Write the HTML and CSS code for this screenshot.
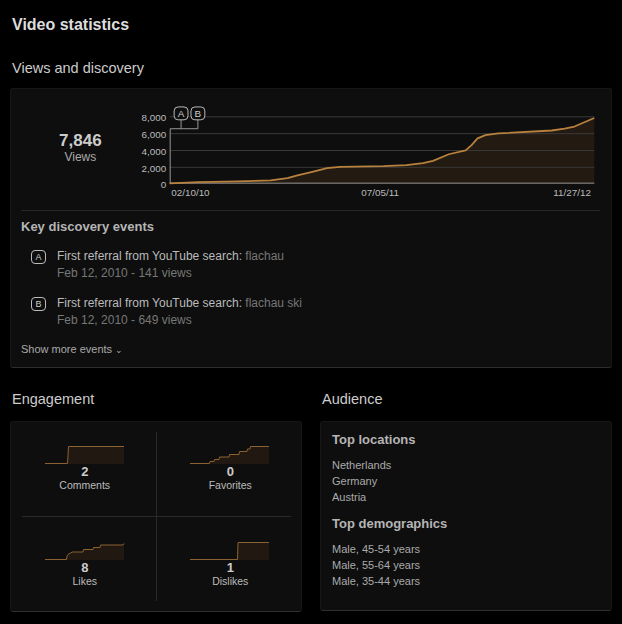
FILE: index.html
```html
<!DOCTYPE html>
<html>

<head>
    <title>Video statistics</title>
    <link rel="stylesheet" href="styles.css">
</head>

<body>
    <div class="page">
        <h1 class="page-title">Video statistics</h1>

        <h2 class="section-title">Views and discovery</h2>
        <div class="panel discovery">
            <div class="views-row">
                <div class="views-total">
                    <div class="views-count">7,846</div>
                    <div class="views-label">Views</div>
                </div>
                <svg class="views-chart" width="465" height="100" viewBox="0 0 465 100">
                    <polygon class="chart-fill" points="30,83.7 59,82.5 99,81.8 132,80.7 149,78.5 159,75.7 174,72 189,68.3 202,67 246,66.3 269,65.3 286,63.3 296,61 312,54.3 329,50.3 335,45 341,38.3 349,35 362,33.3 416,30.3 429,28.5 439,26.3 459,17.7 459,83.5 30,83.5" />
                    <line class="grid" x1="30" y1="16.5" x2="459" y2="16.5" />
                    <line class="grid" x1="30" y1="33.5" x2="459" y2="33.5" />
                    <line class="grid" x1="30" y1="50.5" x2="459" y2="50.5" />
                    <line class="grid" x1="30" y1="67.5" x2="459" y2="67.5" />
                    <line class="axis" x1="30" y1="83.5" x2="459" y2="83.5" />
                    <polyline class="chart-line" points="30,83.7 59,82.5 99,81.8 132,80.7 149,78.5 159,75.7 174,72 189,68.3 202,67 246,66.3 269,65.3 286,63.3 296,61 312,54.3 329,50.3 335,45 341,38.3 349,35 362,33.3 416,30.3 429,28.5 439,26.3 459,17.7" />
                    <!-- event markers -->
                    <polyline class="axis" points="30.5,84 30.5,28.5 58.5,28.5 58.5,19.5" />
                    <line class="axis" x1="41.5" y1="28.5" x2="41.5" y2="19.5" />
                    <rect class="marker" x="34.5" y="6.5" width="14" height="13" rx="4" />
                    <rect class="marker" x="51.5" y="6.5" width="14" height="13" rx="4" />
                    <text class="marker-text" x="41.5" y="16.5">A</text>
                    <text class="marker-text" x="58.5" y="16.5">B</text>
                    <text class="tick" x="26.5" y="21">8,000</text>
                    <text class="tick" x="26.5" y="38">6,000</text>
                    <text class="tick" x="26.5" y="55">4,000</text>
                    <text class="tick" x="26.5" y="72">2,000</text>
                    <text class="tick" x="26.5" y="88">0</text>
                    <text class="date" x="31.5" y="96.3">02/10/10</text>
                    <text class="date mid" x="242.7" y="96.3">07/05/11</text>
                    <text class="date end" x="455.7" y="96.3">11/27/12</text>
                </svg>
            </div>

            <div class="events">
                <h3 class="panel-title">Key discovery events</h3>
                <div class="event">
                    <span class="badge">A</span>
                    <div>
                        <div class="event-text">First referral from YouTube search: <span class="muted">flachau</span></div>
                        <div class="muted">Feb 12, 2010 - 141 views</div>
                    </div>
                </div>
                <div class="event">
                    <span class="badge">B</span>
                    <div>
                        <div class="event-text">First referral from YouTube search: <span class="muted">flachau ski</span></div>
                        <div class="muted">Feb 12, 2010 - 649 views</div>
                    </div>
                </div>
                <div class="show-more">Show more events <span class="chevron">&#8964;</span></div>
            </div>
        </div>

        <div class="columns">
            <div>
                <h2 class="section-title">Engagement</h2>
                <div class="panel engagement">
                    <div class="stat top left">
                        <svg class="spark" width="80" height="18" viewBox="0 0 80 18">
                            <polygon class="spark-fill" points="22.5,17.5 23.5,0.5 79,0.5 79,18 22.5,18" />
                            <polyline class="spark-line" points="0,17.5 22.5,17.5 23.5,0.5 79,0.5" />
                        </svg>
                        <div class="stat-value">2</div>
                        <div class="stat-label">Comments</div>
                    </div>
                    <div class="stat top right">
                        <svg class="spark" width="80" height="18" viewBox="0 0 80 18">
                            <polygon class="spark-fill" points="19.5,17.5 20,15.5 24,15.5 24.5,13.5 29,13.5 29.5,11 39,11 39.5,8.5 49,8.5 49.5,5.5 57,5.5 57.5,3 60,3 60.5,0.5 79,0.5 79,18 19.5,18" />
                            <polyline class="spark-line" points="0,17.5 19.5,17.5 20,15.5 24,15.5 24.5,13.5 29,13.5 29.5,11 39,11 39.5,8.5 49,8.5 49.5,5.5 57,5.5 57.5,3 60,3 60.5,0.5 79,0.5" />
                        </svg>
                        <div class="stat-value">0</div>
                        <div class="stat-label">Favorites</div>
                    </div>
                    <div class="stat bottom left">
                        <svg class="spark" width="80" height="18" viewBox="0 0 80 18">
                            <polygon class="spark-fill" points="21.5,17.5 22,14 23,12.5 25.5,11 27.5,10 38,10 38.5,7.5 48,7.5 48.5,5.5 55,5.5 55.5,3 78,3 79,1.5 79,18 21.5,18" />
                            <polyline class="spark-line" points="0,17.5 21.5,17.5 22,14 23,12.5 25.5,11 27.5,10 38,10 38.5,7.5 48,7.5 48.5,5.5 55,5.5 55.5,3 78,3 79,1.5" />
                        </svg>
                        <div class="stat-value">8</div>
                        <div class="stat-label">Likes</div>
                    </div>
                    <div class="stat bottom right">
                        <svg class="spark" width="80" height="18" viewBox="0 0 80 18">
                            <polygon class="spark-fill" points="47.5,17.5 48,0.5 79,0.5 79,18 47.5,18" />
                            <polyline class="spark-line" points="0,17.5 47.5,17.5 48,0.5 79,0.5" />
                        </svg>
                        <div class="stat-value">1</div>
                        <div class="stat-label">Dislikes</div>
                    </div>
                </div>
            </div>

            <div>
                <h2 class="section-title">Audience</h2>
                <div class="panel audience">
                    <h3 class="panel-title">Top locations</h3>
                    <ul class="audience-list">
                        <li>Netherlands</li>
                        <li>Germany</li>
                        <li>Austria</li>
                    </ul>
                    <h3 class="panel-title">Top demographics</h3>
                    <ul class="audience-list">
                        <li>Male, 45-54 years</li>
                        <li>Male, 55-64 years</li>
                        <li>Male, 35-44 years</li>
                    </ul>
                </div>
            </div>
        </div>
    </div>
</body>

</html>
```

FILE: styles.css
```css
body {
    margin: 0;
    background: #000;
    color: #bbb;
    font-family: "Liberation Sans", Arial, sans-serif;
}

.page {
    padding: 15px 10px 0 10px;
}

.page-title {
    margin: 0 0 24px 2px;
    font-size: 16px;
    line-height: 20px;
    color: #ddd;
}

.section-title {
    margin: 0 0 11px 2px;
    font-size: 14.5px;
    line-height: 18px;
    font-weight: normal;
    color: #ccc;
}

.columns .section-title {
    margin-bottom: 13px;
}

.panel {
    background: #0e0e0e;
    border: 1px solid #161616;
    border-bottom-color: #2e2e2e;
    border-radius: 3px;
}

/* views and discovery */

.discovery {
    padding: 11px 11px 10px 10px;
}

.views-row {
    display: flex;
    align-items: flex-start;
}

.views-total {
    width: 120px;
    padding-top: 32px;
    text-align: center;
}

.views-count {
    font-size: 17px;
    line-height: 18px;
    font-weight: bold;
    color: #ccc;
}

.views-label {
    font-size: 12px;
    line-height: 14px;
    color: #aaa;
}

.views-chart {
    display: block;
}

.views-chart .grid {
    stroke: #3a3a3a;
    stroke-width: 1;
}

.views-chart .axis {
    fill: none;
    stroke: #999;
    stroke-width: 1;
}

.chart-fill {
    fill: #231a12;
}

.chart-line {
    fill: none;
    stroke: #b8813d;
    stroke-width: 1.8;
    stroke-linejoin: round;
}

.marker {
    fill: #0e0e0e;
    stroke: #bbb;
    stroke-width: 1;
}

.marker-text {
    font-size: 10px;
    fill: #ccc;
    text-anchor: middle;
}

.tick {
    font-size: 10px;
    fill: #bbb;
    text-anchor: end;
}

.date {
    font-size: 10px;
    fill: #bbb;
}

.date.mid {
    text-anchor: middle;
}

.date.end {
    text-anchor: end;
}

.events {
    margin-top: 10px;
    padding-top: 8px;
    border-top: 1px solid #262626;
}

.panel-title {
    margin: 0;
    font-size: 13px;
    line-height: 16px;
    color: #b5b5b5;
}

.event {
    display: flex;
    align-items: flex-start;
    margin-left: 10px;
    font-size: 12px;
    line-height: 17px;
}

.events .panel-title {
    margin-bottom: 13px;
}

.event + .event {
    margin-top: 12.6px;
}

.badge {
    box-sizing: border-box;
    width: 15px;
    height: 14px;
    margin: 2px 11px 0 0;
    border: 1px solid #bbb;
    border-radius: 4px;
    font-size: 9px;
    line-height: 12px;
    text-align: center;
    color: #ccc;
}

.event-text {
    color: #bbb;
}

.muted {
    color: #777;
}

.show-more {
    margin-top: 13px;
    font-size: 11px;
    line-height: 14px;
    color: #aaa;
}

.chevron {
    font-size: 9px;
}

/* bottom columns */

.columns {
    display: grid;
    grid-template-columns: 1fr 1fr;
    gap: 18px;
    margin-top: 22px;
}

.engagement {
    display: grid;
    grid-template-columns: 1fr 1fr;
    padding: 10px 10px 10px 11px;
}

.stat {
    height: 85px;
    box-sizing: border-box;
    text-align: center;
}

.stat.top {
    padding-top: 14px;
    border-bottom: 1px solid #2a2a2a;
}

.stat.bottom {
    height: 84px;
    padding-top: 25px;
}

.stat.left {
    padding-right: 8px;
    border-right: 1px solid #2a2a2a;
}

.stat.right {
    padding-left: 13px;
}

.spark {
    display: block;
    margin: 0 auto;
}

.spark-fill {
    fill: #211911;
}

.spark-line {
    fill: none;
    stroke: #8c6131;
    stroke-width: 1;
}

.stat-value {
    font-size: 13px;
    line-height: 15px;
    font-weight: bold;
    color: #ccc;
}

.stat-label {
    font-size: 10.5px;
    line-height: 13px;
    color: #bbb;
}

.audience {
    padding: 10px 11px 0 11px;
    height: 190px;
    box-sizing: border-box;
}

.audience-list {
    list-style: none;
    margin: 9px 0 11px 0;
    padding: 0;
    font-size: 11px;
    line-height: 16px;
    color: #aaa;
}
```
